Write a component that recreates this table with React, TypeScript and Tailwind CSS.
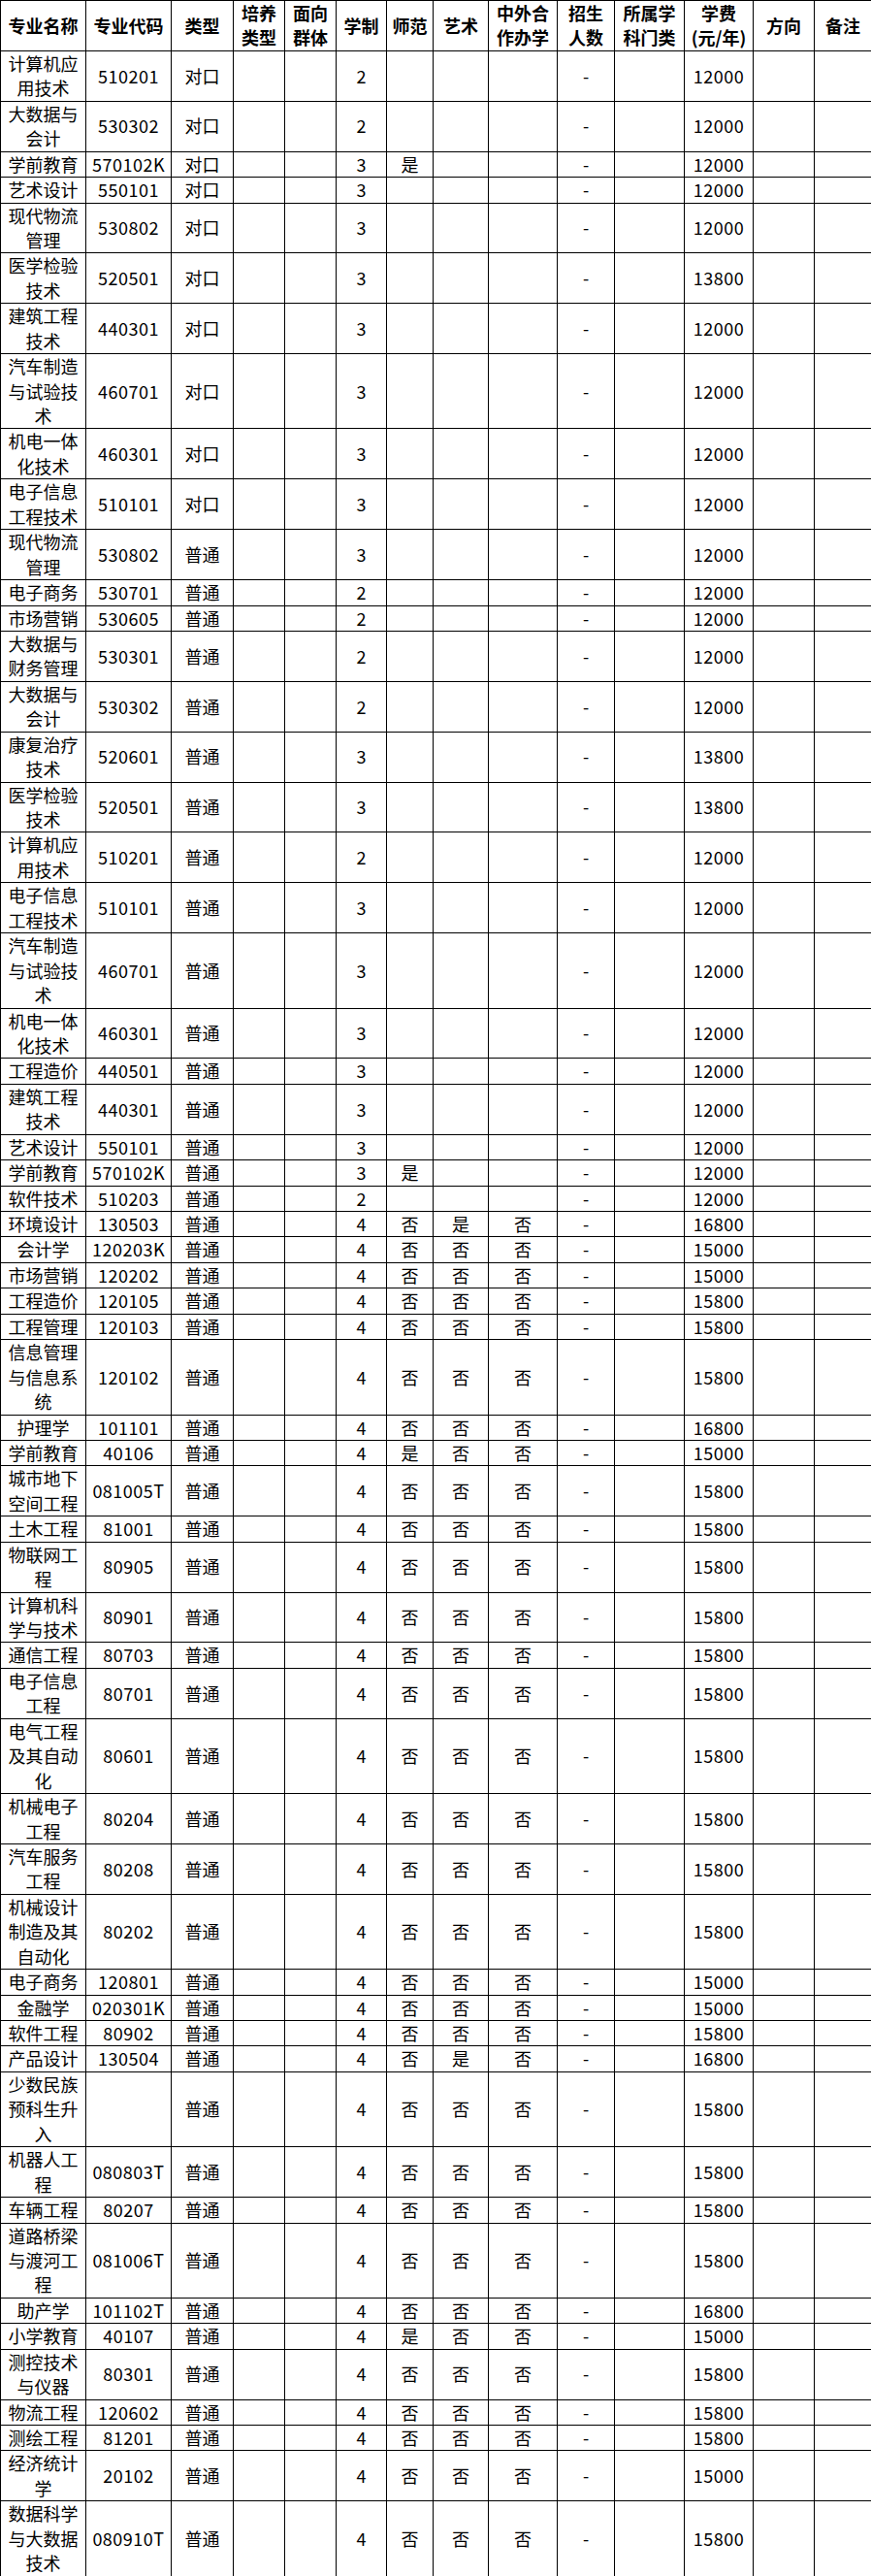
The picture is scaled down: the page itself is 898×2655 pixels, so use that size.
import React from "react";

type Row = [string, string, string, string, string, string, string, string];

const rows: Row[] = [
  ["计算机应用技术", "510201", "对口", "2", "", "", "", "12000"],
  ["大数据与会计", "530302", "对口", "2", "", "", "", "12000"],
  ["学前教育", "570102K", "对口", "3", "是", "", "", "12000"],
  ["艺术设计", "550101", "对口", "3", "", "", "", "12000"],
  ["现代物流管理", "530802", "对口", "3", "", "", "", "12000"],
  ["医学检验技术", "520501", "对口", "3", "", "", "", "13800"],
  ["建筑工程技术", "440301", "对口", "3", "", "", "", "12000"],
  ["汽车制造与试验技术", "460701", "对口", "3", "", "", "", "12000"],
  ["机电一体化技术", "460301", "对口", "3", "", "", "", "12000"],
  ["电子信息工程技术", "510101", "对口", "3", "", "", "", "12000"],
  ["现代物流管理", "530802", "普通", "3", "", "", "", "12000"],
  ["电子商务", "530701", "普通", "2", "", "", "", "12000"],
  ["市场营销", "530605", "普通", "2", "", "", "", "12000"],
  ["大数据与财务管理", "530301", "普通", "2", "", "", "", "12000"],
  ["大数据与会计", "530302", "普通", "2", "", "", "", "12000"],
  ["康复治疗技术", "520601", "普通", "3", "", "", "", "13800"],
  ["医学检验技术", "520501", "普通", "3", "", "", "", "13800"],
  ["计算机应用技术", "510201", "普通", "2", "", "", "", "12000"],
  ["电子信息工程技术", "510101", "普通", "3", "", "", "", "12000"],
  ["汽车制造与试验技术", "460701", "普通", "3", "", "", "", "12000"],
  ["机电一体化技术", "460301", "普通", "3", "", "", "", "12000"],
  ["工程造价", "440501", "普通", "3", "", "", "", "12000"],
  ["建筑工程技术", "440301", "普通", "3", "", "", "", "12000"],
  ["艺术设计", "550101", "普通", "3", "", "", "", "12000"],
  ["学前教育", "570102K", "普通", "3", "是", "", "", "12000"],
  ["软件技术", "510203", "普通", "2", "", "", "", "12000"],
  ["环境设计", "130503", "普通", "4", "否", "是", "否", "16800"],
  ["会计学", "120203K", "普通", "4", "否", "否", "否", "15000"],
  ["市场营销", "120202", "普通", "4", "否", "否", "否", "15000"],
  ["工程造价", "120105", "普通", "4", "否", "否", "否", "15800"],
  ["工程管理", "120103", "普通", "4", "否", "否", "否", "15800"],
  ["信息管理与信息系统", "120102", "普通", "4", "否", "否", "否", "15800"],
  ["护理学", "101101", "普通", "4", "否", "否", "否", "16800"],
  ["学前教育", "40106", "普通", "4", "是", "否", "否", "15000"],
  ["城市地下空间工程", "081005T", "普通", "4", "否", "否", "否", "15800"],
  ["土木工程", "81001", "普通", "4", "否", "否", "否", "15800"],
  ["物联网工程", "80905", "普通", "4", "否", "否", "否", "15800"],
  ["计算机科学与技术", "80901", "普通", "4", "否", "否", "否", "15800"],
  ["通信工程", "80703", "普通", "4", "否", "否", "否", "15800"],
  ["电子信息工程", "80701", "普通", "4", "否", "否", "否", "15800"],
  ["电气工程及其自动化", "80601", "普通", "4", "否", "否", "否", "15800"],
  ["机械电子工程", "80204", "普通", "4", "否", "否", "否", "15800"],
  ["汽车服务工程", "80208", "普通", "4", "否", "否", "否", "15800"],
  ["机械设计制造及其自动化", "80202", "普通", "4", "否", "否", "否", "15800"],
  ["电子商务", "120801", "普通", "4", "否", "否", "否", "15000"],
  ["金融学", "020301K", "普通", "4", "否", "否", "否", "15000"],
  ["软件工程", "80902", "普通", "4", "否", "否", "否", "15800"],
  ["产品设计", "130504", "普通", "4", "否", "是", "否", "16800"],
  ["少数民族预科生升入", "", "普通", "4", "否", "否", "否", "15800"],
  ["机器人工程", "080803T", "普通", "4", "否", "否", "否", "15800"],
  ["车辆工程", "80207", "普通", "4", "否", "否", "否", "15800"],
  ["道路桥梁与渡河工程", "081006T", "普通", "4", "否", "否", "否", "15800"],
  ["助产学", "101102T", "普通", "4", "否", "否", "否", "16800"],
  ["小学教育", "40107", "普通", "4", "是", "否", "否", "15000"],
  ["测控技术与仪器", "80301", "普通", "4", "否", "否", "否", "15800"],
  ["物流工程", "120602", "普通", "4", "否", "否", "否", "15800"],
  ["测绘工程", "81201", "普通", "4", "否", "否", "否", "15800"],
  ["经济统计学", "20102", "普通", "4", "否", "否", "否", "15000"],
  ["数据科学与大数据技术", "080910T", "普通", "4", "否", "否", "否", "15800"],
];

function chunk(s: string): string[] {
  const chars = Array.from(s);
  const out: string[] = [];
  for (let i = 0; i < chars.length; i += 4) out.push(chars.slice(i, i + 4).join(""));
  return out;
}

function Lines({ lines }: { lines: string[] }) {
  return (
    <>
      {lines.map((l, i) => (
        <React.Fragment key={i}>
          {i > 0 && <br />}
          {l}
        </React.Fragment>
      ))}
    </>
  );
}

const headers: string[][] = [
  ["专业名称"],
  ["专业代码"],
  ["类型"],
  ["培养", "类型"],
  ["面向", "群体"],
  ["学制"],
  ["师范"],
  ["艺术"],
  ["中外合", "作办学"],
  ["招生", "人数"],
  ["所属学", "科门类"],
  ["学费", "(元/年)"],
  ["方向"],
  ["备注"],
];

const td = "border border-black p-0 text-center align-middle whitespace-nowrap";

export default function App() {
  return (
    <div
      className="w-[898px] bg-white text-black text-[18px] leading-[25.43px]"
      style={{ fontFamily: '"Noto Sans CJK SC", "Noto Sans", sans-serif' }}
    >
      <table className="w-[898px] table-fixed border-collapse border border-black">
        <colgroup>
          <col className="w-[88px]" />
          <col className="w-[88px]" />
          <col className="w-[64px]" />
          <col className="w-[53px]" />
          <col className="w-[53px]" />
          <col className="w-[52px]" />
          <col className="w-[48px]" />
          <col className="w-[57px]" />
          <col className="w-[71px]" />
          <col className="w-[59px]" />
          <col className="w-[72px]" />
          <col className="w-[71px]" />
          <col className="w-[63px]" />
          <col className="w-[59px]" />
        </colgroup>
        <thead>
          <tr>
            {headers.map((h, i) => (
              <th key={i} className={`${td} font-bold`}>
                <Lines lines={h} />
              </th>
            ))}
          </tr>
        </thead>
        <tbody>
          {rows.map((r, i) => (
            <tr key={i}>
              <td className={td}>
                <Lines lines={chunk(r[0])} />
              </td>
              <td className={`${td} tracking-[0.5px]`}>{r[1]}</td>
              <td className={td}>{r[2]}</td>
              <td className={td}></td>
              <td className={td}></td>
              <td className={td}>{r[3]}</td>
              <td className={td}>{r[4]}</td>
              <td className={td}>{r[5]}</td>
              <td className={td}>{r[6]}</td>
              <td className={td}>-</td>
              <td className={td}></td>
              <td className={`${td} tracking-[0.5px]`}>{r[7]}</td>
              <td className={td}></td>
              <td className={td}></td>
            </tr>
          ))}
        </tbody>
      </table>
    </div>
  );
}
